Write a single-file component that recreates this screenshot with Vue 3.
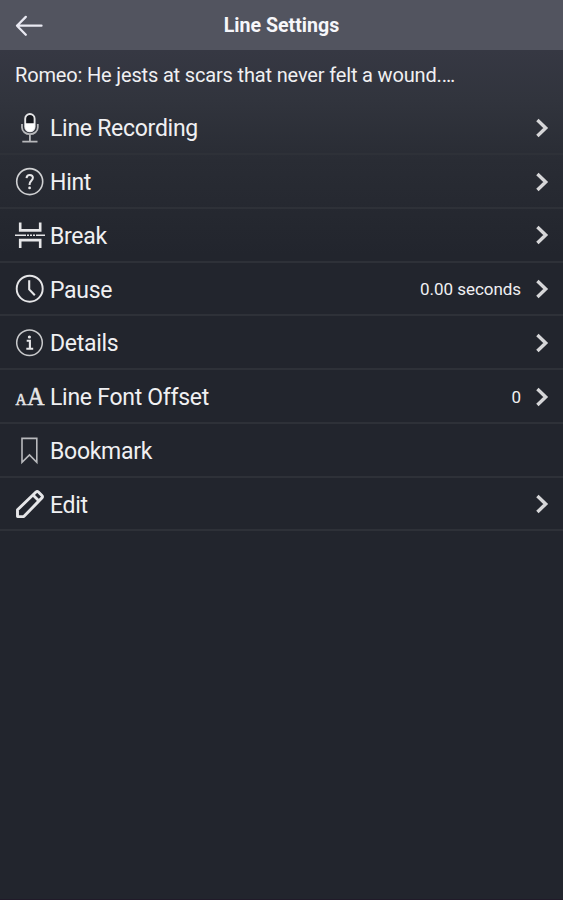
<script setup>
const rows = [
  { icon: 'mic', label: 'Line Recording', arrow: true },
  { icon: 'hint', label: 'Hint', arrow: true },
  { icon: 'break', label: 'Break', arrow: true },
  { icon: 'clock', label: 'Pause', value: '0.00 seconds', arrow: true },
  { icon: 'info', label: 'Details', arrow: true },
  { icon: 'font', label: 'Line Font Offset', value: '0', arrow: true },
  { icon: 'bookmark', label: 'Bookmark', arrow: false },
  { icon: 'edit', label: 'Edit', arrow: true },
]
</script>

<template>
  <div class="screen">
    <header class="bar">
      <svg class="back" width="30" height="24" viewBox="0 0 30 24">
        <path d="M27.5 11.7H3M11.8 2.9L3 11.7l8.8 9" fill="none" stroke="#e9e9f2" stroke-width="2.3" stroke-linecap="round" stroke-linejoin="round" />
      </svg>
      <h1 class="title">Line Settings</h1>
    </header>
    <main class="content">
      <p class="quote">Romeo: He jests at scars that never felt a wound.…</p>
      <ul class="list">
        <li v-for="row in rows" :key="row.label" class="row">
          <svg class="icon" width="30" height="30" viewBox="0 0 30 30" fill="none" stroke="#e6e6e8" stroke-width="1.6">
            <g v-if="row.icon === 'mic'">
              <rect x="10.2" y="1" width="9.4" height="17.4" rx="4.7" fill="#15171d" stroke-width="1.9" />
              <path d="M10.2 10.2h9.4v3.6a4.7 4.7 0 0 1-9.4 0z" fill="#fff" stroke="none" />
              <path d="M7 11v3.4a7.9 6.8 0 0 0 15.8 0V11M14.9 21.4v6.5M7.3 28.6h15.2" stroke="#b7b8bb" stroke-width="1.8" />
            </g>
            <g v-else-if="row.icon === 'hint'">
              <circle cx="14.7" cy="14.6" r="13" stroke="#d0d1d3" stroke-width="1.6" />
              <path d="M11.5 11.2c.2-2.1 1.4-3.3 3.2-3.3 1.9 0 3.2 1.1 3.2 2.9 0 2.8-3.3 3.1-3.3 6.3v.8" stroke-width="2" />
              <circle cx="14.6" cy="20.9" r="1.4" fill="#e6e6e8" stroke="none" />
            </g>
            <g v-else-if="row.icon === 'break'">
              <path d="M5.2 2.5v7.9h20V2.5M5.2 28v-7.9h20V28" stroke-width="2.6" />
              <path d="M0 15.2h9M22 15.2h8" stroke-width="1.6" />
              <path d="M9 15.2h13" stroke-width="1.6" stroke-dasharray="2 1" />
            </g>
            <g v-else-if="row.icon === 'clock'">
              <circle cx="14.7" cy="14.7" r="13" stroke-width="1.9" />
              <path d="M14.2 6.2v9.2l5.6 5.8" stroke-width="2.1" />
            </g>
            <g v-else-if="row.icon === 'info'">
              <circle cx="14.5" cy="14.7" r="12.8" stroke="#c9cacc" stroke-width="1.5" />
              <circle cx="14.4" cy="9" r="1.6" fill="#e6e6e8" stroke="none" />
              <path d="M11.7 12.7h3.2v8M11.3 20.8h6.9" stroke-width="2.1" />
            </g>
            <g v-else-if="row.icon === 'font'" class="letters" fill="#e6e6e8" stroke="#e6e6e8" stroke-width="0.6">
              <text x="0.4" y="22.8" font-size="17" textLength="11" lengthAdjust="spacingAndGlyphs">A</text>
              <text x="12.2" y="22.8" font-size="26" textLength="17.2" lengthAdjust="spacingAndGlyphs">A</text>
            </g>
            <path v-else-if="row.icon === 'bookmark'" d="M7 3.4h14.8v23.9l-7.3-7.4-7.5 7.4z" stroke="#b9babd" stroke-width="1.6" />
            <g v-else stroke-width="2.9" stroke-linejoin="round">
              <path d="M2.5 27.6v-6.8L21 3q1.2-1.1 2.4 0l3.5 3.5q1.2 1.2 0 2.4L8.8 27.6z" />
              <path d="M18 6l6 6" />
            </g>
          </svg>
          <span class="label">{{ row.label }}</span>
          <span v-if="row.value" class="value">{{ row.value }}</span>
          <svg v-if="row.arrow" class="chevron" width="14" height="20" viewBox="0 0 14 20">
            <path d="M2.4 2L10.7 10l-8.3 8" fill="none" stroke="#d6d6d8" stroke-width="3.4" />
          </svg>
        </li>
      </ul>
    </main>
  </div>
</template>

<style>
body {
  background: #22252d;
}
</style>

<style scoped>
.screen {
  display: flex;
  flex-direction: column;
  box-sizing: border-box;
  height: 900px;
  border-bottom: 1px solid #211a29;
  font-family: Roboto, sans-serif;
  color: #f0f0f2;
  background: #22252d;
  overflow: hidden;
}
.bar {
  display: grid;
  grid-template-columns: 30px 1fr 30px;
  align-items: center;
  flex: none;
  height: 50px;
  padding: 0 14px 0 14px;
  background: #52545f;
}
.back {
  display: block;
}
.title {
  margin: 0;
  font-size: 19.6px;
  font-weight: 700;
  line-height: 52px;
  text-align: center;
  color: #f6f6fa;
}
.content {
  flex: 1;
  background: linear-gradient(#363843 0, #31343d 50px, #292c34 110px, #22252d 205px);
}
.quote {
  height: 51.25px;
  margin: 0;
  padding-left: 15px;
  font-size: 20px;
  letter-spacing: -0.16px;
  line-height: 51px;
  white-space: nowrap;
}
.list {
  margin: 0;
  padding: 0;
  list-style: none;
}
.row {
  display: flex;
  align-items: center;
  box-sizing: border-box;
  height: 53.75px;
  padding: 1.5px 14px 0 15px;
  border-bottom: 2px solid #2e3138;
}
.icon {
  flex: none;
  margin-right: 5px;
}
.letters {
  font-family: "Liberation Serif", serif;
}
.label {
  flex: 1;
  padding-top: 2px;
  font-size: 23px;
  letter-spacing: -0.28px;
}
.value {
  margin-right: 14px;
  font-size: 17px;
  letter-spacing: -0.05px;
}
.chevron {
  flex: none;
}
</style>
